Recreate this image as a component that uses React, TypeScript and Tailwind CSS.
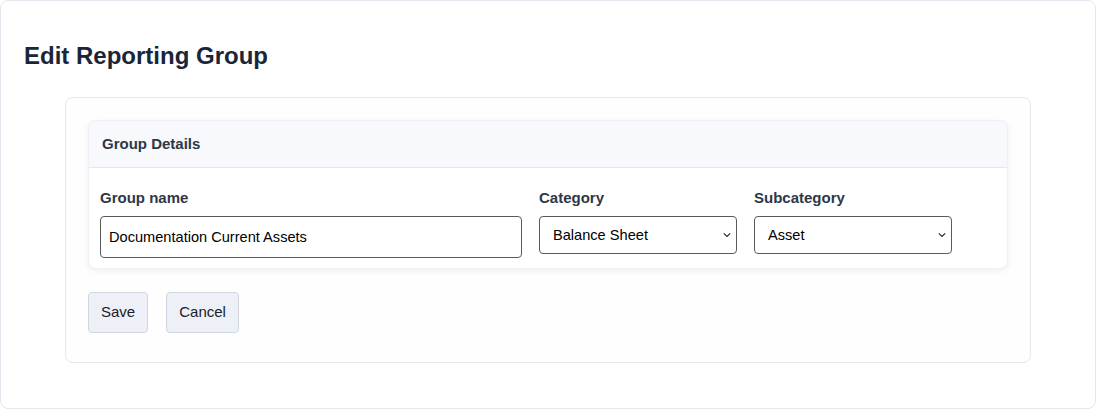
import { useState } from "react";

function Chevron() {
  return (
    <svg
      className="pointer-events-none absolute right-[6px] top-1/2 -translate-y-1/2"
      width="8"
      height="5"
      viewBox="0 0 8 5"
      fill="none"
    >
      <path d="M0.8 0.8l3.2 3.2 3.2-3.2" stroke="#222" strokeWidth="1.1" />
    </svg>
  );
}

type SelectProps = {
  value: string;
  options: string[];
  onChange: (v: string) => void;
};

function NativeSelect({ value, options, onChange }: SelectProps) {
  return (
    <div className="relative w-[198px]">
      {/* native-looking select */}
      <select
        value={value}
        onChange={(e) => onChange(e.target.value)}
        className="h-[38px] w-full appearance-none rounded-[4px] border border-[#5a5a5a] bg-white pl-[13px] pr-6 pt-[2px] text-[14.6px] text-black outline-none"
      >
        {options.map((o) => (
          <option key={o}>{o}</option>
        ))}
      </select>
      <Chevron />
    </div>
  );
}

export default function App() {
  const [name, setName] = useState("Documentation Current Assets");
  const [category, setCategory] = useState("Balance Sheet");
  const [subcategory, setSubcategory] = useState("Asset");

  return (
    <div className="h-[409px] w-[1096px] bg-white font-['Liberation_Sans',Arial,sans-serif]">
      <div className="h-full rounded-lg border border-[#e3e8ee] bg-white px-[23px] pt-[39px]">
        <h1 className="text-[24px] font-bold leading-8 text-[#1a2638]">Edit Reporting Group</h1>

        <div className="mx-[41px] mt-[25px] rounded-lg border border-[#e3e8ee] bg-[#fefeff] px-[22px] pb-[29px] pt-[22px]">
          {/* Group Details panel */}
          <div className="rounded-lg border border-[#edf0f4] bg-white shadow-[0_2px_6px_rgba(15,23,42,0.06)]">
            <div className="flex h-[47px] items-center rounded-t-lg border-b border-[#e3e8ee] bg-[#f7f9fc] px-[13px]">
              <span className="text-[15px] font-bold text-[#2d3748]">Group Details</span>
            </div>
            <div className="flex gap-[17px] px-[11px] pb-[10px] pt-[20px]">
              <div className="w-[422px]">
                <label className="mb-2 block text-[15px] font-bold leading-5 text-[#2d3748]">Group name</label>
                <input
                  value={name}
                  onChange={(e) => setName(e.target.value)}
                  className="h-[42px] w-full rounded-[4px] border border-[#5a5a5a] bg-white px-[8px] text-[14.6px] text-black outline-none"
                />
              </div>
              <div>
                <label className="mb-2 block text-[15px] font-bold leading-5 text-[#2d3748]">Category</label>
                <NativeSelect
                  value={category}
                  options={["Balance Sheet", "Income Statement"]}
                  onChange={setCategory}
                />
              </div>
              <div>
                <label className="mb-2 block text-[15px] font-bold leading-5 text-[#2d3748]">Subcategory</label>
                <NativeSelect
                  value={subcategory}
                  options={["Asset", "Liability", "Equity"]}
                  onChange={setSubcategory}
                />
              </div>
            </div>
          </div>

          <div className="mt-[23px] flex gap-[18px]">
            <button className="h-[41px] rounded-[4px] border border-[#cfd6e0] bg-[#edf1f7] px-3 text-[15px] text-[#1a202c]">
              Save
            </button>
            <button className="h-[41px] rounded-[4px] border border-[#cfd6e0] bg-[#edf1f7] px-3 text-[15px] text-[#1a202c]">
              Cancel
            </button>
          </div>
        </div>
      </div>
    </div>
  );
}
